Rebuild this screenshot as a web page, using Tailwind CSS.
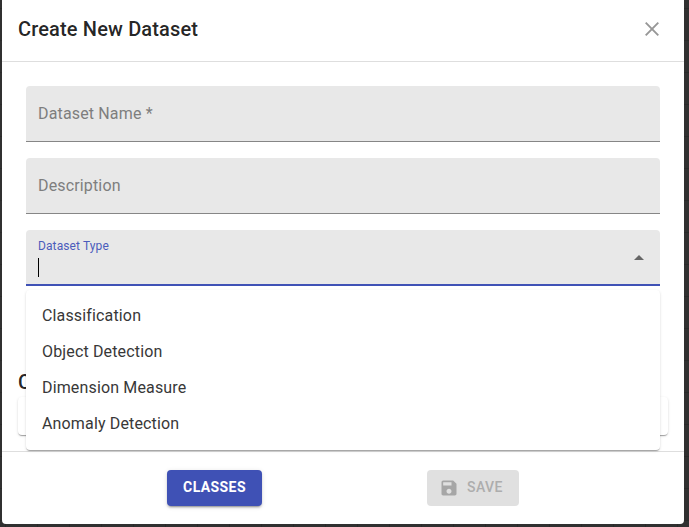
<!DOCTYPE html>
<html lang="en">
<head>
<meta charset="utf-8">
<title>Create New Dataset</title>
<script src="https://cdn.jsdelivr.net/npm/@tailwindcss/browser@4"></script>
</head>
<body class="h-[527px] w-[689px] overflow-hidden bg-[#303030] bg-[linear-gradient(to_right,#292929_1px,transparent_1px),linear-gradient(to_bottom,#292929_1px,transparent_1px)] bg-[size:32px_32px] bg-[position:5px_8px] pl-[2px] font-['Roboto',sans-serif] text-black/87">
<div class="flex h-[524px] w-[682px] flex-col rounded-b-[4px] bg-white">
  <header class="flex h-[62px] shrink-0 items-center justify-between border-b border-[#dedede] px-4 pb-[3px]">
    <h1 class="text-[20px] leading-8 font-medium tracking-[0.15px]">Create New Dataset</h1>
    <button class="mr-[9px]" aria-label="Close"><svg class="block size-[14px]" viewBox="0 0 14 14"><path d="M0.7 0.7L13.3 13.3M13.3 0.7L0.7 13.3" fill="none" stroke="#979797" stroke-width="1.9"/></svg></button>
  </header>
  <main class="flex min-h-0 flex-1 flex-col px-4 pt-6">
    <div class="flex flex-col gap-4 px-2">
      <label class="flex h-14 items-center rounded-t-[4px] border-b border-[#868686] bg-[#e8e8e8] px-3 text-[16px] tracking-[0.15px] text-[#7e7e7e]">Dataset Name *</label>
      <label class="flex h-14 items-center rounded-t-[4px] border-b border-[#868686] bg-[#e8e8e8] px-3 text-[16px] tracking-[0.15px] text-[#7e7e7e]">Description</label>
      <div class="relative flex h-14 items-center justify-between rounded-t-[4px] border-b-2 border-[#3f51b5] bg-[#e8e8e8] pr-4 pl-3">
        <div class="flex h-full flex-col pt-2">
          <label class="text-[12px] leading-4 tracking-[0.11px] text-[#4b5cbc]">Dataset Type</label>
          <span class="mt-1 block h-[19px] w-px bg-black"></span>
        </div>
        <svg class="h-[5px] w-[10px]" viewBox="0 0 10 5"><path d="M0 5L5 0L10 5Z" fill="#666"/></svg>
        <ul class="absolute top-[60px] left-0 z-10 h-[160px] w-[634px] rounded-[4px] bg-white py-2 text-[16px] tracking-[0.15px] text-[#383838] shadow-[0_2px_1px_-1px_rgba(0,0,0,0.2),0_1px_1px_0_rgba(0,0,0,0.14),0_1px_3px_0_rgba(0,0,0,0.12)]">
          <li class="flex h-9 items-center px-4">Classification</li>
          <li class="flex h-9 items-center px-4">Object Detection</li>
          <li class="flex h-9 items-center px-4">Dimension Measure</li>
          <li class="flex h-9 items-center px-4">Anomaly Detection</li>
        </ul>
      </div>
    </div>
    <h2 class="mt-20 text-[20px] leading-8 font-medium tracking-[0.15px]">C</h2>
    <div class="mt-[-1px] h-[38px] shrink-0 rounded-[4px] bg-white shadow-[0_2px_1px_-1px_rgba(0,0,0,0.2),0_1px_1px_0_rgba(0,0,0,0.14),0_1px_3px_0_rgba(0,0,0,0.12)]"></div>
  </main>
  <footer class="flex h-[73px] shrink-0 items-center justify-evenly border-t border-[#dedede]">
    <button class="flex h-9 w-[95px] items-center justify-center rounded-[4px] bg-[#3f51b5] pb-px text-[14px] font-bold tracking-[0.4px] text-white shadow-[0_3px_1px_-2px_rgba(0,0,0,0.2),0_2px_2px_0_rgba(0,0,0,0.14),0_1px_5px_0_rgba(0,0,0,0.12)]">CLASSES</button>
    <button class="flex h-9 w-[92px] items-center rounded-[4px] bg-[#e0e0e0] pb-px pl-3 text-[14px] font-medium tracking-[0.4px] text-[#adadad]" disabled>
      <svg class="mt-px mr-2 size-5" viewBox="0 0 24 24" fill="#a6a6a6"><path d="M17 3H5c-1.110 0-2 .9-2 2v14c0 1.100.89 2 2 2h14c1.100 0 2-.9 2-2V7l-4-4zm-5 16c-1.660 0-3-1.340-3-3s1.340-3 3-3 3 1.340 3 3-1.340 3-3 3zm3-10H5V5h10v4z"/></svg>SAVE</button>
  </footer>
</div>
</body>
</html>
